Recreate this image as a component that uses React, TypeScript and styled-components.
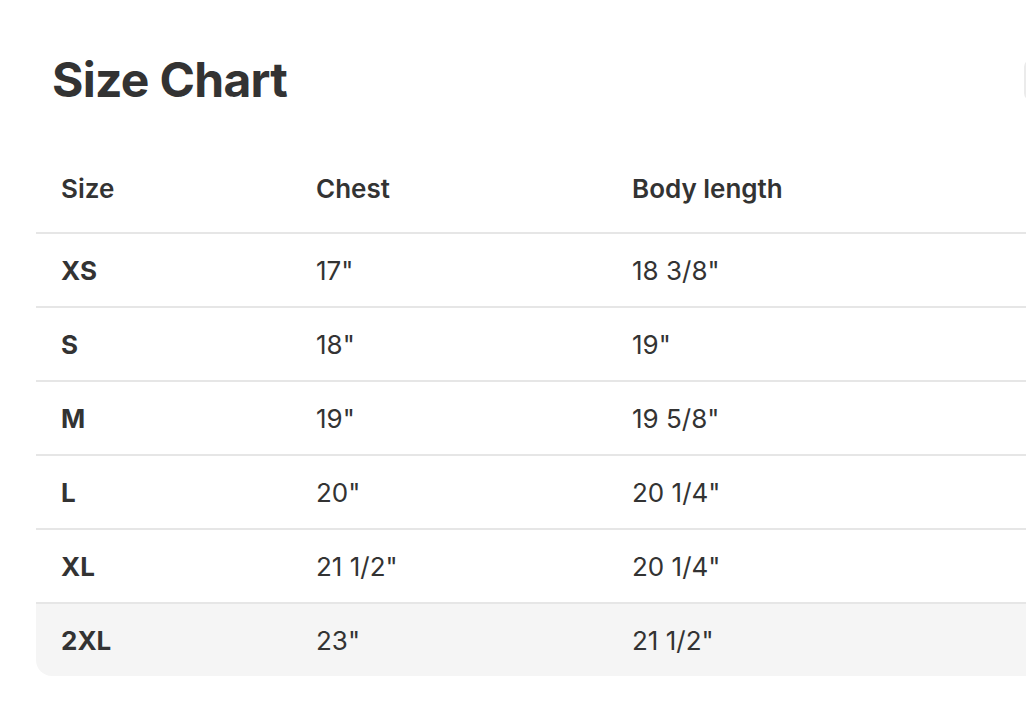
import React from "react";
import styled, { createGlobalStyle } from "styled-components";

const Global = createGlobalStyle`
  html, body { margin: 0; padding: 0; background: #ffffff; overflow: hidden; }
  body { font-family: Inter, "Noto Sans", "Liberation Sans", sans-serif; color: #333333; }
`;

const Page = styled.div`
  width: 1058px;
  padding: 51px 0 0 36px;
  box-sizing: border-box;
`;

const TitleRow = styled.div`
  display: flex;
  align-items: center;
  justify-content: space-between;
  height: 58px;
`;

const Title = styled.h1`
  margin: 0 0 0 16px;
  font-size: 48px;
  line-height: 58px;
  font-weight: 700;
  letter-spacing: -0.7px;
  color: #333333;
`;

const EdgeButton = styled.div`
  width: 34px;
  height: 42px;
  box-sizing: border-box;
  border: 2px solid #ebebeb;
  border-right: none;
  border-radius: 8px 0 0 8px;
  background: #ffffff;
`;

const Table = styled.table`
  margin-top: 35px;
  width: 1000px;
  border-collapse: separate;
  border-spacing: 0;
  table-layout: fixed;
`;

const Th = styled.th`
  height: 88px;
  padding: 0 0 0 25px;
  text-align: left;
  vertical-align: middle;
  font-size: 26px;
  font-weight: 600;
  color: #333333;
  border-bottom: 2px solid #e6e6e6;
`;

const Td = styled.td<{ $bold?: boolean; $last?: boolean }>`
  height: 72px;
  padding: 0 0 0 25px;
  text-align: left;
  vertical-align: middle;
  font-size: 26px;
  font-weight: ${(p) => (p.$bold ? 700 : 400)};
  color: #333333;
  border-bottom: ${(p) => (p.$last ? "none" : "2px solid #e6e6e6")};
  background: ${(p) => (p.$last ? "#f5f5f5" : "transparent")};
  &:first-child {
    border-bottom-left-radius: ${(p) => (p.$last ? "16px" : "0")};
  }
`;

const rows = [
  ["XS", '17"', '18 3/8"'],
  ["S", '18"', '19"'],
  ["M", '19"', '19 5/8"'],
  ["L", '20"', '20 1/4"'],
  ["XL", '21 1/2"', '20 1/4"'],
  ["2XL", '23"', '21 1/2"'],
];

export default function App() {
  return (
    <>
      <Global />
      <Page>
        <TitleRow>
          <Title>Size Chart</Title>
          <EdgeButton />
        </TitleRow>
        <Table>
          <colgroup>
            <col style={{ width: 255 }} />
            <col style={{ width: 316 }} />
            <col />
          </colgroup>
          <thead>
            <tr>
              <Th>Size</Th>
              <Th>Chest</Th>
              <Th>Body length</Th>
            </tr>
          </thead>
          <tbody>
            {rows.map((r, i) => {
              const last = i === rows.length - 1;
              return (
                <tr key={r[0]}>
                  <Td $bold $last={last}>{r[0]}</Td>
                  <Td $last={last}>{r[1]}</Td>
                  <Td $last={last}>{r[2]}</Td>
                </tr>
              );
            })}
          </tbody>
        </Table>
      </Page>
    </>
  );
}
